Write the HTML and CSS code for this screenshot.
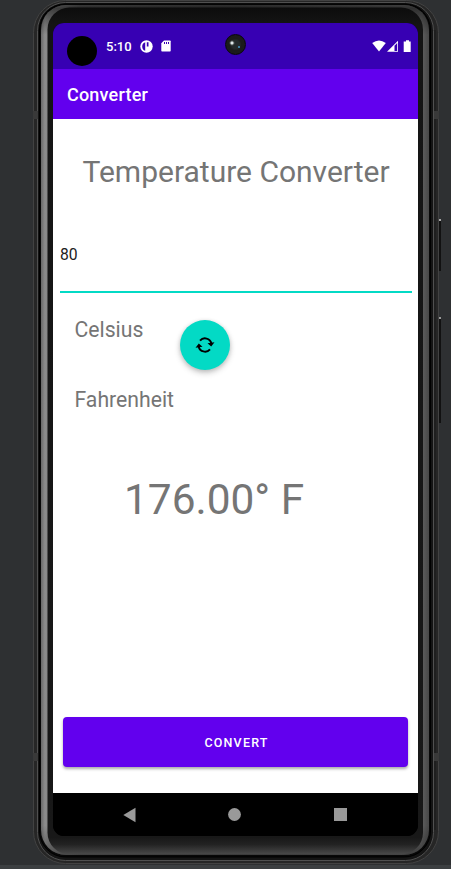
FILE: index.html
```html
<!DOCTYPE html>
<html lang="en">
<head>
<meta charset="utf-8">
<title>Converter</title>
<link rel="stylesheet" href="styles.css">
</head>
<body>
<div class="stage">
  <svg class="device" width="451" height="869" viewBox="0 0 451 869" fill="none">
    <defs>
      <linearGradient id="rail" x1="0" x2="1" y1="0" y2="0">
        <stop offset="0" stop-color="#686868"/><stop offset=".01" stop-color="#8c8c8c"/><stop offset=".018" stop-color="#858585"/>
        <stop offset=".1" stop-color="#555"/><stop offset=".5" stop-color="#444"/><stop offset=".98" stop-color="#606060"/><stop offset="1" stop-color="#484848"/>
      </linearGradient>
      <linearGradient id="shade" x1="0" x2="0" y1="0" y2="1">
        <stop offset="0" stop-color="#000" stop-opacity=".35"/><stop offset=".004" stop-color="#000" stop-opacity=".5"/><stop offset=".035" stop-color="#000" stop-opacity="0"/>
        <stop offset=".965" stop-color="#000" stop-opacity="0"/><stop offset="1" stop-color="#000" stop-opacity=".35"/>
      </linearGradient>
      <linearGradient id="glass" x1="0" x2="0" y1="0" y2="1">
        <stop offset="0" stop-color="#0c0c0c"/><stop offset=".02" stop-color="#141414"/><stop offset=".98" stop-color="#181818"/><stop offset=".988" stop-color="#222"/><stop offset="1" stop-color="#4a4a4a"/>
      </linearGradient>
    </defs>
    <rect y="865" width="451" height="4" fill="#3c3f41"/>
    <rect x="438" y="219" width="3" height="52" fill="#111"/>
    <rect x="439" y="219" width="2" height="2" fill="#aaa"/>
    <rect x="438" y="317" width="3" height="106" fill="#111"/>
    <rect x="439" y="317" width="2" height="2" fill="#999"/>
    <rect x="33.500" y=".5" width="405" height="863" rx="32" fill="#262626" stroke="#424242"/>
    <rect x="37.500" y="2.500" width="396" height="858" rx="28" fill="#141414" stroke="#505050"/>
    <rect x="39.500" y="4" width="391" height="853" rx="26" fill="#080808" stroke="#000"/>
    <rect x="434.500" y="30" width="1" height="800" fill="#181818"/>
    <rect x="41" y="5" width="388" height="850" rx="25" fill="url(#rail)"/>
    <rect x="41" y="5" width="388" height="850" rx="25" fill="url(#shade)"/>
    <rect x="47.500" y="7.500" width="375.500" height="847" rx="22" fill="url(#glass)"/>
    <path d="M33 111h5v8h-5zM434 111h5v8h-5zM33 753h5v8h-5zM434 753h5v8h-5z" fill="#393939"/>
  </svg>
  <main class="screen">
    <header class="status">
      <span class="hole"></span>
      <span class="time">5:10</span>
      <svg class="app-mark" width="13" height="13" viewBox="0 0 13 13"><circle cx="6.500" cy="6.500" r="6.200" fill="#fff"/><path d="M5.200 2.200Q2.200 3.200 2.200 6.500T5.200 10.800zM6.800 2.200h1.700v4.200H6.800z" fill="#3700b3"/></svg>
      <svg class="sd" width="10" height="12" viewBox="0 0 10 12"><path d="M3 .5h6q.7 0 .7.8v9.400q0 .8-.7.8H1q-.7 0-.7-.8V3.300z" fill="#fff"/><path d="M3.500 2v2M5.500 2v2M7.500 2v2" stroke="#3700b3"/></svg>
      <svg class="signals" width="40" height="13" viewBox="0 0 40 13"><path d="M.2 3Q7-2.200 13.800 3L7 11.500z" fill="#fff"/><path d="M26 .8v11H15z" fill="#fff"/><path d="M22.500 5.800 25.200 3v8h-2.700z" fill="#3700b3"/><path d="M34 .3h3v1.200h1.700V12h-7V1.500H34z" fill="#fff"/></svg>
      <span class="camera"></span>
    </header>
    <div class="appbar">Converter</div>
    <section class="content">
      <h1>Temperature Converter</h1>
      <div class="field">80</div>
      <div class="units">
        <div class="names"><span>Celsius</span><span>Fahrenheit</span></div>
        <button class="swap" aria-label="Swap"><svg width="20" height="18" viewBox="0 0 20 18"><path d="M5 4.600A6.600 6.600 0 0 1 16.400 7.500M15 13.400A6.600 6.600 0 0 1 3.600 10.500" fill="none" stroke="#000" stroke-width="1.900"/><path d="M12.500 7.200 19.500 6.300 16.200 10.400zM7.500 10.800.5 11.700 3.800 7.600z" fill="#000"/></svg></button>
      </div>
      <output>176.00° F</output>
      <button class="convert">CONVERT</button>
    </section>
    <nav class="nav">
      <svg width="13" height="16" viewBox="0 0 13 16"><path d="M12.500.8v14.400L.3 8z" fill="#999"/></svg>
      <svg width="13" height="13"><circle cx="6.500" cy="6.500" r="6.400" fill="#999"/></svg>
      <svg width="13" height="13"><path d="M0 0h13v13H0z" fill="#999"/></svg>
    </nav>
  </main>
</div>
</body>
</html>
```
FILE: styles.css
```css
* { box-sizing: border-box; }
body { margin: 0; background: #2e3032; font-family: Roboto, sans-serif; overflow: hidden; }
.stage { position: relative; width: 451px; height: 869px; padding: 23px 33px 33px 53px; }
.device { position: absolute; inset: 0; }
.screen { position: relative; display: flex; flex-direction: column; width: 365px; height: 813px; border-radius: 11px; overflow: hidden; background: #000; }
.status { position: relative; display: flex; align-items: center; height: 46px; flex: none; background: #3700b3; padding: 0 6px 0 14px; color: #fff; }
.hole { width: 30px; height: 30px; border-radius: 50%; background: #000; margin: 10px 0 0 -.5px; }
.time { width: 34px; margin-left: 9.500px; font-size: 13px; font-weight: 500; line-height: 16px; padding-top: 1px; }
.sd { margin-left: 8px; }
.signals { margin-left: auto; }
.camera { position: absolute; left: 172px; top: 11px; width: 21px; height: 21px; border-radius: 50%; border: 1px solid #080808; background: radial-gradient(circle at 6px 8px, #dfe8ea 0 1px, #49504f 2px, transparent 3px), radial-gradient(circle at 13px 12px, #4388b0 0 .6px, transparent 1.500px), radial-gradient(circle, #242a2b 0 4px, #1b1b1b 6px); }
.appbar { height: 50px; flex: none; background: #6200ee; color: #fff; font-size: 18px; font-weight: 500; line-height: 51px; padding-left: 14px; letter-spacing: .2px; }
.content { flex: 1; display: flex; flex-direction: column; color: #757575; background: #fff; }
h1 { margin: 34px 0 0 29.500px; font-size: 30px; line-height: 38px; font-weight: 400; white-space: nowrap; }
.field { margin: 42px 6px 0 7px; height: 60px; border-bottom: 2px solid #03dac5; color: #212121; font-size: 15.700px; line-height: 44px; }
.units { display: flex; height: 127px; }
.names { width: 126.500px; padding: 23px 0 0 21.500px; display: flex; flex-direction: column; gap: 42px; font-size: 21.200px; line-height: 28px; }
button { border: 0; padding: 0; font-family: inherit; }
.swap { width: 50px; height: 50px; margin-top: 26.500px; border-radius: 50%; background: #03dac5; box-shadow: 0 3px 6px #0003, 0 1px 4px #0002; display: grid; place-items: center; }
output { margin: 50px 0 0 71px; font-size: 42.400px; line-height: 60px; white-space: nowrap; }
.convert { margin: auto 10px 26px; height: 50px; flex: none; border-radius: 4px; background: #6200ee; color: #fff; font-size: 12.500px; font-weight: 500; letter-spacing: 1.200px; padding-left: 2px; box-shadow: 0 2px 3px #0005; }
.nav { height: 43px; flex: none; background: #000; display: flex; align-items: center; padding-left: 69.500px; gap: 92.500px; }
.nav svg { flex: none; }
```
